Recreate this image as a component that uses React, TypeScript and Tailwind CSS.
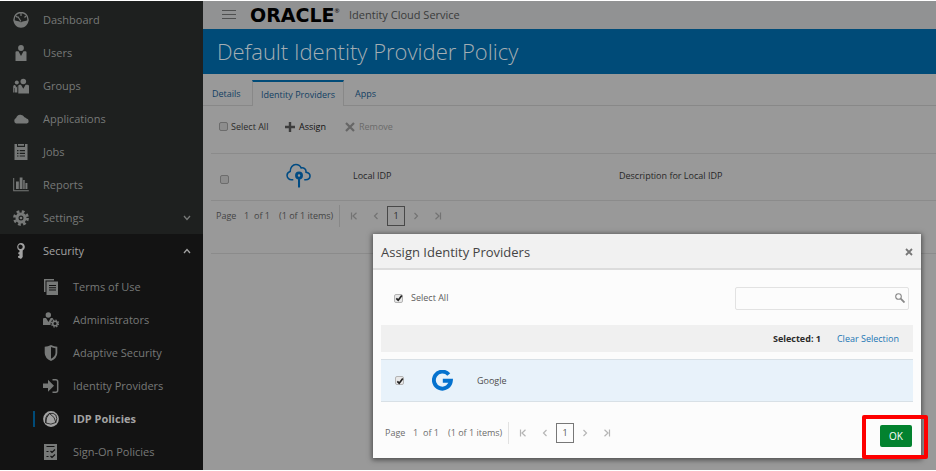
import React from "react";

type IconProps = { className?: string };

const Svg = ({ className = "", children }: IconProps & { children: React.ReactNode }) => (
  <svg viewBox="0 0 16 16" className={`size-4 shrink-0 ${className}`} fill="currentColor" aria-hidden="true">
    {children}
  </svg>
);

const DashboardIcon = () => (
  <Svg>
    <path d="M1.2 8.6A7 7 0 0 1 1 7.5 7 7 0 0 1 15 7.5a7 7 0 0 1-.2 1.1" fill="none" stroke="currentColor" strokeWidth="1.4" />
    <path d="M.4 7.800C3 9 5.500 9.400 6.500 9.400 7 10.500 9 10.500 9.500 9.400 11 9.300 13 9 15.600 7.800 15.500 12.500 12 15.800 8 15.800S.5 12.500.4 7.800Z" />
    <path d="M8 9.500 4.800 4.500M8 1v3M3 4l1.500 1.500M13 4l-1.500 1.500" stroke="currentColor" strokeWidth="1.200" fill="none" />
  </Svg>
);
const UserIcon = () => (
  <Svg>
    <circle cx="8" cy="3" r="2.900" />
    <path d="M2.500 7.200q0-1 1-1H5.500L8 11l2.500-4.800h2q1 0 1 1V16h-11Z" />
  </Svg>
);
const GroupIcon = () => (
  <Svg>
    <circle cx="10.300" cy="3.500" r="2.800" />
    <circle cx="3.800" cy="4.500" r="2" />
    <path d="M5.300 8q0-1.300 1.200-1.300H8l2.300 4 2.300-4h1.600Q16 6.700 16 8v7.500H5.300ZM.2 8.500Q.2 7 1.500 7h.7l1.200 2.500L4.300 8v6.500H1.500V10H1v4.500H.2Z" />
  </Svg>
);
const CloudIcon = () => (
  <Svg>
    <path d="M3 12.500a3 3 0 0 1 .1-5.500A4.500 4.500 0 0 1 11.500 6.300a3.400 3.400 0 0 1 2 1.300 2.500 2.500 0 0 1 .3 4.900Z" />
  </Svg>
);
const JobsIcon = () => (
  <Svg>
    <path fillRule="evenodd" d="M1.500 0H4v3h8V0h2.500v16h-13ZM4 6v1.200h1.500V6Zm2.700 0v1.200H12V6ZM4 8.700v1.200h1.500V8.700Zm2.700 0v1.200H12V8.700ZM4 11.400v1.200h1.500v-1.200Zm2.700 0v1.200H12v-1.200ZM5 0h6v1.800H5Z" />
  </Svg>
);
const ReportsIcon = () => (
  <Svg>
    <path d="M.2 1h1v12.300h14.600v1H.2ZM3 4.500h2.800V12H3Zm3.700-4h2.800V12H6.700Zm3.500 2.500h1.500v9h-1.500Zm2.200 3h2V12h-2Z" />
  </Svg>
);
const GearIcon = ({ className }: IconProps) => (
  <Svg className={className}>
    <g fill="none" stroke="currentColor">
      <circle cx="8" cy="8" r="4" strokeWidth="3" />
      <circle cx="8" cy="8" r="6.500" strokeWidth="2.800" strokeDasharray="2.700 2.405" />
    </g>
    <circle cx="8" cy="8" r="1.300" />
  </Svg>
);
const KeyIcon = () => (
  <Svg>
    <path fillRule="evenodd" d="M8 0a4 4 0 0 1 1.700 7.500V14L8 16l-3-1.500v-1.300l1.500-.6v-1.200L5.300 11V9.500l1.200-.5V7.600A4 4 0 0 1 8 0Zm0 1.700A2.200 2.200 0 1 0 8 6a2.200 2.200 0 0 0 0-4.300Z" />
  </Svg>
);
const TermsIcon = () => (
  <Svg>
    <path d="M1 0h10v1.400H2.500V13H1Z" />
    <path fillRule="evenodd" d="M3.500 2.500h11.500V16H3.500ZM6 6v1h7V6Zm0 2.300v1h7v-1Zm0 2.300v1h7v-1Z" />
  </Svg>
);
const AdminIcon = () => (
  <Svg>
    <circle cx="5.300" cy="3" r="2.700" />
    <path d="M0 7q0-.9 1-.9h2l2.500 4 2.200-4H9.500l1 1.200Q7.500 8.500 7.500 13H0Z" />
    <g fill="none" stroke="currentColor">
      <circle cx="12" cy="11.500" r="2.300" strokeWidth="1.600" />
      <circle cx="12" cy="11.500" r="3.500" strokeWidth="1.200" strokeDasharray="1.500 1.250" />
    </g>
  </Svg>
);
const ShieldIcon = () => (
  <Svg>
    <path fillRule="evenodd" d="M8 0q3 1.600 6.300 1.700V8q0 5-6.300 8-6.300-3-6.300-8V1.700Q5 1.600 8 0Zm0 2v11.800q4.500-2.300 4.500-6V3.200Q10 3 8 2Z" />
  </Svg>
);
const ProvidersIcon = () => (
  <Svg>
    <path d="M0 5.500h5V1.800l6 6-6 6v-3.700H0Z" />
    <path d="M9.500 1.800h3.200q2 0 2 2v8.400q0 2-2 2H9.500" fill="none" stroke="currentColor" strokeWidth="1.500" />
  </Svg>
);
const PoliciesIcon = () => (
  <Svg>
    <circle cx="8" cy="8" r="7.900" />
    <g fill="none" stroke="#131313" strokeWidth=".8">
      <path d="M6.500 2.500Q2.500 6.500 2.800 12 8 14.500 12.800 11.500 12.500 6 6.500 2.500Z" />
      <path d="M6.500 2.500Q10.500 1.500 12.800 4 14.800 7.500 12.800 11.500M6.500 2.500Q1.500 5 2.800 12" />
    </g>
  </Svg>
);
const SignOnIcon = () => (
  <Svg>
    <path d="M1 0h13v16H1Z" />
    <path d="M3.500 2.500h8M7.500 7l1.500 1.500L12 5.500M7.500 12l1.500 1.500 3-3M3.500 7.500h2M3.500 12.500h2" fill="none" stroke="#131313" strokeWidth="1.200" />
  </Svg>
);

const Chevron = ({ up }: { up?: boolean }) => (
  <svg viewBox="0 0 8 6" className="ml-auto h-1.5 w-2" fill="none" stroke="currentColor" strokeWidth="1.300" aria-hidden="true">
    <path d={up ? "M1 5 4 1.500 7 5" : "M1 1 4 4.500 7 1"} />
  </svg>
);

const mainItems = [
  { label: "Dashboard", icon: <DashboardIcon /> },
  { label: "Users", icon: <UserIcon /> },
  { label: "Groups", icon: <GroupIcon /> },
  { label: "Applications", icon: <CloudIcon /> },
  { label: "Jobs", icon: <JobsIcon /> },
  { label: "Reports", icon: <ReportsIcon /> },
  { label: "Settings", icon: <GearIcon />, expandable: true },
];

const securityItems = [
  { label: "Terms of Use", icon: <TermsIcon /> },
  { label: "Administrators", icon: <AdminIcon /> },
  { label: "Adaptive Security", icon: <ShieldIcon /> },
  { label: "Identity Providers", icon: <ProvidersIcon /> },
  { label: "IDP Policies", icon: <PoliciesIcon />, active: true },
  { label: "Sign-On Policies", icon: <SignOnIcon /> },
];

function Sidebar() {
  return (
    <nav aria-label="Main" className="w-[203px] shrink-0 bg-[#1e201f] pt-0.5 text-[11px] leading-4 text-[#777978]">
      <ul>
        {mainItems.map((item) => (
          <li key={item.label}>
            <a href="#" className="flex h-[33px] items-center gap-3.5 pr-3 pl-[13px]">
              {item.icon}
              <span>{item.label}</span>
              {item.expandable && <Chevron />}
            </a>
          </li>
        ))}
      </ul>
      <div className="bg-[#131313] pb-0.5">
        <a href="#" className="mb-[3px] flex h-[33px] items-center gap-3.5 pr-3 pl-[13px] text-[#a3a3a3]">
          <KeyIcon />
          <span>Security</span>
          <Chevron up />
        </a>
        <ul>
          {securityItems.map((item) => (
            <li key={item.label} className="flex h-[33px] items-center pl-[33px]">
              <span className={`h-4 w-0.5 ${item.active ? "bg-[#004b78]" : ""}`} />
              <a
                href="#"
                className={`flex items-center gap-3.5 pl-2 ${item.active ? "font-bold text-[#a3a3a3]" : ""}`}
              >
                {item.icon}
                <span>{item.label}</span>
              </a>
            </li>
          ))}
        </ul>
      </div>
    </nav>
  );
}

function Checkbox({ label, checked, dim }: { label: string; checked?: boolean; dim?: boolean }) {
  return (
    <label className="flex items-center">
      <span className="grid size-[9px] place-items-center">
        <input
          type="checkbox"
          defaultChecked={checked}
          aria-label={label}
          className={`col-start-1 row-start-1 size-[9px] appearance-none rounded-xs border ${
            dim ? "border-[#6c6c6c] bg-[#8d8d8d]" : "border-[#b4b4b4] bg-[#e8e8e8]"
          }`}
        />
        {checked && (
          <svg viewBox="0 0 8 8" className="pointer-events-none col-start-1 row-start-1 size-2" aria-hidden="true">
            <path d="M1.300 4.300 3.200 6.200 6.800 1.500" fill="none" stroke="#222" strokeWidth="1.700" />
          </svg>
        )}
      </span>
    </label>
  );
}

function PageArrow({ label, d }: { label: string; d: string }) {
  return (
    <button type="button" aria-label={label} className="grid h-5 w-[22px] place-items-center">
      <svg viewBox="0 0 8 8" className="size-2" fill="none" stroke="currentColor" strokeWidth="1.200" aria-hidden="true">
        <path d={d} />
      </svg>
    </button>
  );
}

function Pager({ dim }: { dim?: boolean }) {
  return (
    <div className={`flex items-center text-[9px] leading-4 ${dim ? "text-[#444]" : "text-[#6c6c6c]"}`}>
      <span className="w-7">Page</span>
      <span className="w-2.5">1</span>
      <span className="w-[25px]">of 1</span>
      <span className="w-[60px] whitespace-nowrap">(1 of 1 items)</span>
      <span className={`h-[22px] w-px ${dim ? "bg-[#888]" : "bg-[#e2e2e2]"}`} />
      <div className={`ml-[3px] flex items-center ${dim ? "text-[#737373]" : "text-[#b5b5b5]"}`}>
        <PageArrow label="First page" d="M1.500 .5v7M6.500 .8 3 4l3.500 3.200" />
        <PageArrow label="Previous page" d="M5.500 1 2.500 4l3 3" />
        <button
          type="button"
          aria-current="page"
          className={`h-5 w-[18px] border text-center leading-4 ${
            dim ? "border-[#484848] text-[#2b2b2b]" : "border-[#777] text-[#555]"
          }`}
        >
          1
        </button>
        <PageArrow label="Next page" d="M2.500 1l3 3-3 3" />
        <PageArrow label="Last page" d="M6.500 .5v7M1.500 .8 5 4 1.500 7.200" />
      </div>
    </div>
  );
}

function PolicyPage() {
  return (
    <main className="min-w-0 flex-1 bg-[#999]">
      <header className="flex h-7 items-center bg-[#919293] pb-px pl-[19px]">
        <button type="button" aria-label="Toggle menu" className="mr-[14px]">
          <svg viewBox="0 0 14 9" className="h-[9px] w-3.5" stroke="#4f5050" strokeWidth="1" aria-hidden="true">
            <path d="M0 .5h14M0 4.500h14M0 8.500h14" />
          </svg>
        </button>
        <div className="flex w-[99px] items-center">
          <span className="font-['DejaVu_Sans'] text-[19px] leading-6 font-bold text-black">ORACLE</span>
          <span className="mb-2 text-[6px] leading-3 text-black">®</span>
        </div>
        <span className="text-[11px] leading-4 text-[#3a3b3b]">Identity Cloud Service</span>
      </header>

      <h1 className="h-[45px] bg-[#004b78] pl-3.5 text-[22px] leading-[45px] font-light text-[#a5aeb3]">
        Default Identity Provider Policy
      </h1>

      <div role="tablist" className="flex h-8 items-end border-b border-[#888] text-[9px] leading-4 text-[#123f63]">
        <button type="button" role="tab" className="h-[26px] w-[49px] pl-[9px] pt-1 text-left">
          Details
        </button>
        <button
          type="button"
          role="tab"
          aria-selected="true"
          className="-mb-px h-[26px] w-[92px] border-x border-t-2 border-x-[#888] border-t-[#004b78] bg-[#999] pt-0.5 whitespace-nowrap"
        >
          Identity Providers
        </button>
        <button type="button" role="tab" className="h-[26px] px-[11px] pt-1">
          Apps
        </button>
      </div>

      <section className="ml-2 border-b border-[#8b8b8b] pb-[26px]">
        <div className="flex h-[47px] items-center pb-1.5 pl-2 text-[9px] leading-4 text-[#2b2b2b]">
          <Checkbox label="Select all policies" dim />
          <span className="ml-[3px] w-[54px]">Select All</span>
          <button type="button" className="flex w-[60px] items-center gap-1 text-[#111]">
            <svg viewBox="0 0 10 10" className="size-2.5 shrink-0" stroke="#3d3d3d" strokeWidth="2.400" aria-hidden="true">
              <path d="M5 0v10M0 5h10" />
            </svg>
            Assign
          </button>
          <button type="button" className="flex items-center gap-1 text-[#6a6a6a]">
            <svg viewBox="0 0 10 10" className="size-2.5 shrink-0" stroke="#666" strokeWidth="2.200" aria-hidden="true">
              <path d="m1 1 8 8M9 1 1 9" />
            </svg>
            Remove
          </button>
        </div>

        <table className="w-full table-fixed border-y border-[#8b8b8b] text-left text-[9px] leading-4 text-[#282828]">
          <tbody>
            <tr className="h-[47px]">
              <td className="w-[75px] pt-1 pl-[9px]">
                <Checkbox label="Select Local IDP" dim />
              </td>
              <td className="w-[67px]">
                <svg viewBox="0 0 24 24" className="-mt-1 size-[25px]" fill="none" stroke="#004b83" strokeWidth="1.500" aria-hidden="true">
                  <path d="M7 16H5.500A4.200 4.200 0 0 1 1 12c0-2 1.300-3.400 3-3.900C4 4.500 6.500 1.500 9.500 1.500c2.500 0 4.200 1.300 5 3.200 2.500-.5 5 1 4.700 4.100C22 9.300 23.300 11 23 13c-.3 2-2 3-4 3h-1.500" />
                  <circle cx="12.500" cy="12" r="2.500" strokeWidth="2.600" />
                  <path d="M12.500 14v9.500" strokeWidth="2" />
                </svg>
              </td>
              <td className="w-[266px] pb-0.5">Local IDP</td>
              <td className="pb-0.5">Description for Local IDP</td>
            </tr>
          </tbody>
        </table>

        <div className="pt-1 pl-[5px]">
          <Pager dim />
        </div>
      </section>
    </main>
  );
}

function AssignDialog() {
  return (
    <div
      role="dialog"
      aria-labelledby="assign-title"
      className="absolute right-[15px] bottom-[13px] left-[373px] flex flex-col bg-[#fcfcfc] shadow-[0_1px_5px_1px_#00000080]"
    >
      <div className="flex h-9 items-center justify-between border-b-2 border-[#dcdcdc] bg-[#f1f1f1] px-2 pt-0.5">
        <h2 id="assign-title" className="text-[13px] leading-5 text-[#444]">
          Assign Identity Providers
        </h2>
        <button type="button" aria-label="Close">
          <svg viewBox="0 0 8 8" className="size-2" stroke="#777" strokeWidth="1.800" aria-hidden="true">
            <path d="m1 1 6 6M7 1 1 7" />
          </svg>
        </button>
      </div>

      <div className="flex h-[55px] items-center pt-px pr-3 pl-[21px] text-[9px] leading-4 text-[#5c5c5c]">
        <Checkbox label="Select all providers" checked />
        <span className="ml-2">Select All</span>
        <div className="ml-auto flex h-[23px] w-[174px] items-center rounded-xs border border-[#e2e2e2] pr-[3px]">
          <input type="text" aria-label="Search" className="h-full min-w-0 flex-1 px-2 outline-none" />
          <svg viewBox="0 0 10 10" className="size-2.5" fill="none" stroke="#888" aria-hidden="true">
            <circle cx="3.500" cy="3.500" r="2.800" strokeWidth="1.100" />
            <path d="m5.700 5.700 3.800 3.800" strokeWidth="1.800" />
          </svg>
        </div>
      </div>

      <div className="mx-2 flex h-[27px] items-center justify-end gap-4 bg-[#f0f0f0] pr-3.5 text-[9px] leading-4">
        <strong className="text-[#2b2b2b]">Selected: 1</strong>
        <a href="#" className="text-[#2176b4]">
          Clear Selection
        </a>
      </div>

      <div className="mx-2 mt-[7px] flex h-[43px] items-center border-y border-[#d8e0e6] bg-[#e8f2fa] pl-3.5 text-[9px] leading-4 text-[#4c4c4c]">
        <Checkbox label="Select Google" checked />
        <svg viewBox="0 0 20 20" className="ml-7 size-[21px]" fill="none" stroke="#0572ce" strokeWidth="3.700" aria-hidden="true">
          <path d="M16 4.300A8.100 8.100 0 1 0 18 10.200H10.300" />
        </svg>
        <span className="ml-6">Google</span>
      </div>

      <div className="flex h-14 items-end justify-between pr-[9px] pb-[11px] pl-3">
        <div className="pb-[3px]">
          <Pager />
        </div>
        <div className="relative">
          <button type="button" className="block h-[22px] w-8 rounded-xs bg-[#03822f] text-[10px] leading-[22px] text-white">
            OK
          </button>
          {/* Highlight frame around the confirm button */}
          <div className="pointer-events-none absolute -top-2.5 -right-4 -bottom-3 -left-[18px] rounded-xs border-4 border-[#fe0000]" />
        </div>
      </div>
    </div>
  );
}

export default function App() {
  return (
    <div className="relative flex bg-white py-px font-['Open_Sans','Noto_Sans',sans-serif]">
      <Sidebar />
      <PolicyPage />
      <AssignDialog />
    </div>
  );
}
